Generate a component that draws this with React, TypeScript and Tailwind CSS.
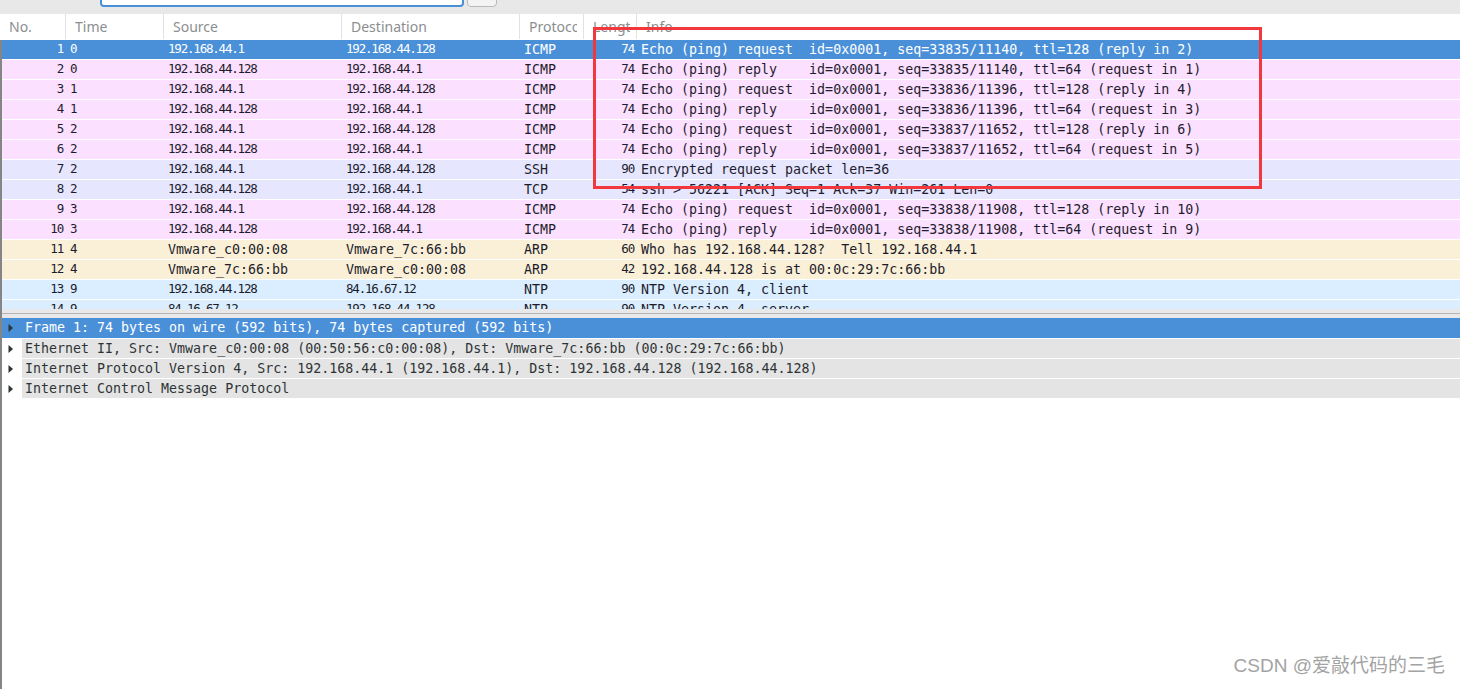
import type { ReactNode } from 'react';

type Packet = {
    no: number;
    time: string;
    src: string;
    dst: string;
    proto: string;
    len: string;
    info: string;
    bg: string;
};

const PINK = 'bg-[#fce0ff]';
const LAVENDER = 'bg-[#e7e6ff]';
const SAND = 'bg-[#faf0d7]';
const SKY = 'bg-[#daeeff]';

const packets: Packet[] = [
    { no: 1, time: '0', src: '192.168.44.1', dst: '192.168.44.128', proto: 'ICMP', len: '74', info: 'Echo (ping) request  id=0x0001, seq=33835/11140, ttl=128 (reply in 2)', bg: PINK },
    { no: 2, time: '0', src: '192.168.44.128', dst: '192.168.44.1', proto: 'ICMP', len: '74', info: 'Echo (ping) reply    id=0x0001, seq=33835/11140, ttl=64 (request in 1)', bg: PINK },
    { no: 3, time: '1', src: '192.168.44.1', dst: '192.168.44.128', proto: 'ICMP', len: '74', info: 'Echo (ping) request  id=0x0001, seq=33836/11396, ttl=128 (reply in 4)', bg: PINK },
    { no: 4, time: '1', src: '192.168.44.128', dst: '192.168.44.1', proto: 'ICMP', len: '74', info: 'Echo (ping) reply    id=0x0001, seq=33836/11396, ttl=64 (request in 3)', bg: PINK },
    { no: 5, time: '2', src: '192.168.44.1', dst: '192.168.44.128', proto: 'ICMP', len: '74', info: 'Echo (ping) request  id=0x0001, seq=33837/11652, ttl=128 (reply in 6)', bg: PINK },
    { no: 6, time: '2', src: '192.168.44.128', dst: '192.168.44.1', proto: 'ICMP', len: '74', info: 'Echo (ping) reply    id=0x0001, seq=33837/11652, ttl=64 (request in 5)', bg: PINK },
    { no: 7, time: '2', src: '192.168.44.1', dst: '192.168.44.128', proto: 'SSH', len: '90', info: 'Encrypted request packet len=36', bg: LAVENDER },
    { no: 8, time: '2', src: '192.168.44.128', dst: '192.168.44.1', proto: 'TCP', len: '54', info: 'ssh > 56221 [ACK] Seq=1 Ack=37 Win=261 Len=0', bg: LAVENDER },
    { no: 9, time: '3', src: '192.168.44.1', dst: '192.168.44.128', proto: 'ICMP', len: '74', info: 'Echo (ping) request  id=0x0001, seq=33838/11908, ttl=128 (reply in 10)', bg: PINK },
    { no: 10, time: '3', src: '192.168.44.128', dst: '192.168.44.1', proto: 'ICMP', len: '74', info: 'Echo (ping) reply    id=0x0001, seq=33838/11908, ttl=64 (request in 9)', bg: PINK },
    { no: 11, time: '4', src: 'Vmware_c0:00:08', dst: 'Vmware_7c:66:bb', proto: 'ARP', len: '60', info: 'Who has 192.168.44.128?  Tell 192.168.44.1', bg: SAND },
    { no: 12, time: '4', src: 'Vmware_7c:66:bb', dst: 'Vmware_c0:00:08', proto: 'ARP', len: '42', info: '192.168.44.128 is at 00:0c:29:7c:66:bb', bg: SAND },
    { no: 13, time: '9', src: '192.168.44.128', dst: '84.16.67.12', proto: 'NTP', len: '90', info: 'NTP Version 4, client', bg: SKY },
    { no: 14, time: '9', src: '84.16.67.12', dst: '192.168.44.128', proto: 'NTP', len: '90', info: 'NTP Version 4, server', bg: SKY },
];

const details = [
    'Frame 1: 74 bytes on wire (592 bits), 74 bytes captured (592 bits)',
    'Ethernet II, Src: Vmware_c0:00:08 (00:50:56:c0:00:08), Dst: Vmware_7c:66:bb (00:0c:29:7c:66:bb)',
    'Internet Protocol Version 4, Src: 192.168.44.1 (192.168.44.1), Dst: 192.168.44.128 (192.168.44.128)',
    'Internet Control Message Protocol',
];

const headers = ['No.', 'Time', 'Source', 'Destination', 'Protocol', 'Length', 'Info'];

const cols = 'grid grid-cols-[66px_98px_178px_178px_64px_53px_1fr]';
const mono = "font-['DejaVu_Sans_Mono',monospace] text-[13.3px] whitespace-pre";
// the numeric cells render in a narrower mono face
const narrow = "font-['DejaVu_Sans_Mono',monospace] text-[12.5px] tracking-[-1.2px] whitespace-pre";

function Cell({ children, className }: { children: ReactNode; className?: string }) {
    return <div className={`flex items-center overflow-hidden ${className ?? ''}`}>{children}</div>;
}

function isAddr(s: string) {
    return /^[0-9.]+$/.test(s);
}

function Arrow() {
    return (
        <svg width="6" height="10" viewBox="0 0 6 10" className="shrink-0">
            <path d="M0.5 1 L5 5 L0.5 9 Z" fill="#2e3436" />
        </svg>
    );
}

export default function App() {
    return (
        <div className="relative flex h-[689px] w-[1460px] flex-col overflow-hidden bg-white font-['Noto_Sans',sans-serif]">
            {/* toolbar strip with display filter */}
            <div className="flex h-[14px] shrink-0 items-end overflow-hidden bg-[#e8e8e8] pb-[7px] pl-[100px]">
                <div className="h-[22px] w-[364px] rounded-[4px] border-2 border-[#4a90d9] bg-white" />
                <div className="ml-[3px] h-[22px] w-[30px] rounded-[4px] border border-[#b9b9b9] bg-[#f3f3f3]" />
            </div>

            {/* column header */}
            <div className={`${cols} h-[26px] shrink-0 bg-white pb-px text-[14px] text-[#8b8e8f]`}>
                {headers.map((h, i) => (
                    <div
                        key={h}
                        className={`flex items-center pl-[9px] pr-[6px] ${i < 6 ? 'border-r border-[#e2e2e2]' : ''}`}
                    >
                        <span className="overflow-hidden whitespace-nowrap">{h}</span>
                    </div>
                ))}
            </div>

            <div className="flex flex-1 flex-col border-l-2 border-[#858585]">
                {/* packet list */}
                <div className="h-[269px] shrink-0 overflow-hidden">
                    {packets.map((p) => {
                        const sel = p.no === 1;
                        const txt = sel ? 'text-white' : 'text-[#1c1c2c]';
                        return (
                            <div key={p.no} className={`${cols} -ml-[2px] mb-px h-[19px] ${sel ? 'bg-[#4a90d9]' : p.bg} ${txt}`}>
                                <Cell className={`justify-end pr-[3px] ${narrow}`}>{p.no}</Cell>
                                <Cell className={`pl-[4px] ${narrow}`}>{p.time}</Cell>
                                <Cell className={`pl-[4px] ${isAddr(p.src) ? narrow : mono}`}>{p.src}</Cell>
                                <Cell className={`pl-[4px] ${isAddr(p.dst) ? narrow : mono}`}>{p.dst}</Cell>
                                <Cell className={`pl-[4px] ${mono}`}>{p.proto}</Cell>
                                <Cell className={`justify-end pr-[3px] ${narrow}`}>{p.len}</Cell>
                                <Cell className={`pl-[4px] ${mono}`}>{p.info}</Cell>
                            </div>
                        );
                    })}
                </div>

                {/* pane splitter */}
                <div className="flex h-[9px] shrink-0 flex-col justify-center bg-[#e8e8e8]">
                    <div className="h-px bg-[#b4b4b4]" />
                </div>

                {/* packet details */}
                <div className="flex flex-col gap-px">
                    {details.map((d, i) => {
                        const sel = i === 0;
                        return (
                            <div key={d} className={`flex items-center ${sel ? 'h-[20px] bg-[#4a90d9]' : 'h-[19px]'}`}>
                                <div className="flex w-[20px] shrink-0 pl-[6px]">
                                    <Arrow />
                                </div>
                                <div
                                    className={`flex h-full flex-1 items-center pl-[3px] ${mono} ${sel ? 'text-white' : 'bg-[#e4e4e4] text-[#2e3436]'}`}
                                >
                                    {d}
                                </div>
                            </div>
                        );
                    })}
                </div>
            </div>

            {/* annotation box drawn over the list */}
            <div className="pointer-events-none absolute left-[593px] top-[27px] h-[162px] w-[669px] border-[3px] border-[#f2383c]" />

            {/* watermark */}
            <div className="pointer-events-none absolute bottom-[9px] right-[15px] font-['Liberation_Sans','Noto_Sans_CJK_SC',sans-serif] text-[19px] text-[#a3a3a3]">
                CSDN @爱敲代码的三毛
            </div>
        </div>
    );
}
